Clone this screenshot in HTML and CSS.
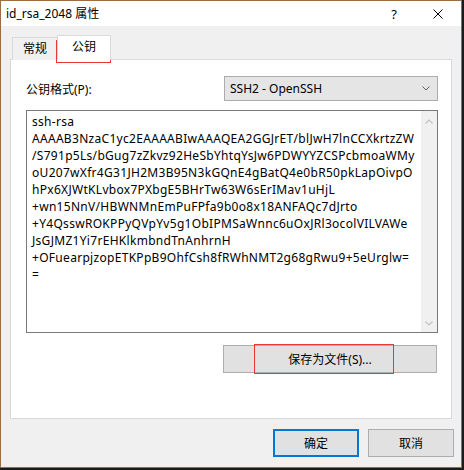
FILE: index.html
```html
<!DOCTYPE html>
<html lang="zh-CN">
<head>
  <meta charset="UTF-8">
  <title>id_rsa_2048 属性</title>
  <link rel="stylesheet" href="styles.css">
</head>
<body>

  <div class="window">
    <!-- Title bar -->
    <div class="titlebar">
      <span class="title">id_rsa_2048 属性</span>
      <span class="help">?</span>
      <span class="close">
        <svg width="10" height="10" viewBox="0 0 10 10"><path d="M0.5 0.5L9.5 9.5M9.5 0.5L0.5 9.5" stroke="#000" stroke-width="1" fill="none"/></svg>
      </span>
    </div>

    <div class="client">
      <div class="tabs">
        <div class="tab">常规</div>
        <div class="tab active">公钥</div>
      </div>

      <div class="panel">
        <div class="format-row">
          <span class="label">公钥格式(P):</span>
          <div class="select">
            <span>SSH2 - OpenSSH</span>
            <svg width="8" height="5" viewBox="0 0 8 5"><polyline points="0.5,0.5 4,4 7.5,0.5" stroke="#606060" fill="none" stroke-width="1"/></svg>
          </div>
        </div>

        <div class="key-box">
          <div class="key-text">ssh-rsa
AAAAB3NzaC1yc2EAAAABIwAAAQEA2GGJrET/blJwH7lnCCXkrtzZW
/S791p5Ls/bGug7zZkvz92HeSbYhtqYsJw6PDWYYZCSPcbmoaWMy
oU207wXfr4G31JH2M3B95N3kGQnE4gBatQ4e0bR50pkLapOivpO
hPx6XJWtKLvbox7PXbgE5BHrTw63W6sErIMav1uHjL
+wn15NnV/HBWNMnEmPuFPfa9b0o8x18ANFAQc7dJrto
+Y4QsswROKPPyQVpYv5g1ObIPMSaWnnc6uOxJRl3ocolVILVAWe
JsGJMZ1Yi7rEHKlkmbndTnAnhrnH
+OFuearpjzopETKPpB9OhfCsh8fRWhNMT2g68gRwu9+5eUrglw=
=</div>
          <div class="scrollbar">
            <svg width="8" height="5" viewBox="0 0 8 5"><polyline points="0.5,4.5 4,1 7.5,4.5" stroke="#c2c2c2" fill="none" stroke-width="1.2"/></svg>
            <svg width="8" height="5" viewBox="0 0 8 5"><polyline points="0.5,0.5 4,4 7.5,0.5" stroke="#c2c2c2" fill="none" stroke-width="1.2"/></svg>
          </div>
        </div>

        <button class="btn save-btn">保存为文件(S)...</button>
      </div>

      <div class="buttons">
        <button class="btn default">确定</button>
        <button class="btn">取消</button>
      </div>
    </div>

    <!-- red annotation boxes -->
    <div class="mark mark-tab"></div>
    <div class="mark mark-save"></div>
  </div>

</body>
</html>
```

FILE: styles.css
```css
body {
  margin: 0;
  background: #1b1b1b;
  font-family: "Noto Sans", "Noto Sans CJK SC", sans-serif;
  font-size: 12px;
  color: #000;
}

.window {
  position: relative;
  width: 460px;
  height: 466px;
  border: 1px solid #9a6d42;
  background: #f0f0f0;
}

/* Title bar */
.titlebar {
  display: flex;
  align-items: center;
  height: 25px;
  background: #fff;
  padding-left: 5px;
}

.titlebar .title {
  flex: 1;
  font-size: 12px;
  line-height: 25px;
}

.titlebar .help {
  font-size: 13px;
  margin-right: 36px;
}

.titlebar .close {
  display: flex;
  margin-right: 18px;
}

/* Client area */
.client {
  padding: 9px 9px 0 9px;
}

.tabs {
  display: flex;
  align-items: flex-start;
  margin-left: 2px;
  height: 25px;
}

.tab {
  box-sizing: border-box;
  border: 1px solid #d9d9d9;
  border-bottom: none;
  text-align: center;
  background: #f0f0f0;
}

.tab:first-child {
  width: 46px;
  height: 23px;
  margin-top: 2px;
  line-height: 21px;
}

.tab.active {
  position: relative;
  z-index: 1;
  width: 54px;
  height: 25px;
  margin-left: -1px;
  background: #fff;
  line-height: 21px;
}

.panel {
  box-sizing: border-box;
  display: flex;
  flex-direction: column;
  width: 442px;
  height: 360px;
  margin-top: -1px;
  padding: 16px 13px 0 15px;
  background: #fff;
  border: 1px solid #d9d9d9;
}

.format-row {
  display: flex;
  justify-content: space-between;
  align-items: center;
  height: 25px;
}

.select {
  box-sizing: border-box;
  display: flex;
  align-items: center;
  justify-content: space-between;
  width: 214px;
  height: 25px;
  padding: 0 7px 0 5px;
  background: #e5e5e5;
  border: 1px solid #acacac;
}

.key-box {
  box-sizing: border-box;
  display: flex;
  height: 223px;
  margin-top: 9px;
  border: 1px solid #7a7a7a;
}

.key-text {
  flex: 1;
  padding: 2px 0 0 5px;
  line-height: 17px;
  letter-spacing: 0.3px;
  white-space: pre;
  overflow: hidden;
}

.scrollbar {
  display: flex;
  flex-direction: column;
  justify-content: space-between;
  align-items: center;
  width: 16px;
  padding: 8px 0 6px;
  box-sizing: border-box;
  background: #f0f0f0;
}

.btn {
  box-sizing: border-box;
  font-family: inherit;
  font-size: 12px;
  color: #000;
  background: #e1e1e1;
  border: 1px solid #adadad;
  padding: 0;
}

.save-btn {
  align-self: flex-end;
  width: 214px;
  height: 28px;
  margin: 12px 1px 0 0;
}

.buttons {
  display: flex;
  justify-content: flex-end;
  gap: 9px;
  margin: 10px -2px 0 0;
}

.buttons .btn {
  width: 86px;
  height: 28px;
}

.buttons .default {
  border: 2px solid #0078d7;
}

/* Red annotation boxes */
.mark {
  position: absolute;
  border: 1px solid #e8393a;
}

.mark-tab {
  left: 55px;
  top: 39px;
  width: 53px;
  height: 21px;
}

.mark-save {
  left: 253px;
  top: 343px;
  width: 138px;
  height: 28px;
}
```
